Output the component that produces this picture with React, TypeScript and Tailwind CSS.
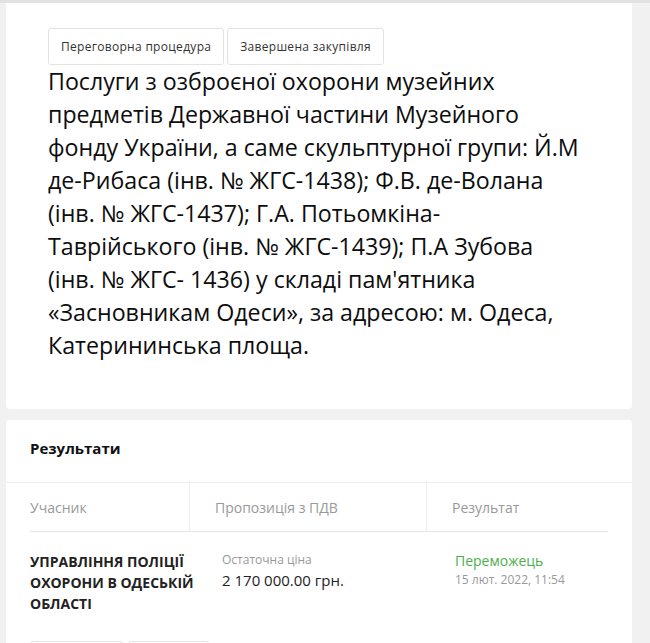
import React from "react";

const tags = ["Переговорна процедура", "Завершена закупівля"];

const titleLines = [
	"Послуги з озброєної охорони музейних",
	"предметів Державної частини Музейного",
	"фонду України, а саме скульптурної групи: Й.М",
	"де-Рибаса (інв. № ЖГС-1438); Ф.В. де-Волана",
	"(інв. № ЖГС-1437); Г.А. Потьомкіна-",
	"Таврійського (інв. № ЖГС-1439); П.А Зубова",
	"(інв. № ЖГС- 1436) у складі пам'ятника",
	"«Засновникам Одеси», за адресою: м. Одеса,",
	"Катерининська площа.",
];

const App: React.FC = () => {
	return (
		<div
			className="min-h-screen bg-[#f1f1f1] border-t-[3px] border-[#e2e2e2] pl-[6px] pr-[18px]"
			style={{ fontFamily: '"Open Sans", sans-serif' }}
		>
			<div className="bg-white rounded-b px-[42px] pt-[25px] pb-[47px]">
				<div className="flex gap-[3px]">
					{tags.map((tag) => (
						<span
							key={tag}
							className="h-[37px] px-3 flex items-center border border-[#e3e3e3] rounded-[3px] text-[12px] tracking-[0.3px] text-[#333]"
						>
							{tag}
						</span>
					))}
				</div>
				<h1 className="text-[23.2px] leading-[33px] text-[#0d0d0d] font-normal whitespace-nowrap">
					{titleLines.map((line, i) => (
						<React.Fragment key={i}>
							{line}
							{i < titleLines.length - 1 && <br />}
						</React.Fragment>
					))}
				</h1>
			</div>

			<div className="bg-white rounded-t mt-[11px]">
				<h2 className="px-6 pt-[17px] pb-[23px] text-[15px] leading-[22px] font-bold text-[#111]">
					Результати
				</h2>
				<div className="flex border-t border-[#eeeeee] h-[49px] text-[14px] text-[#999]">
					<div className="w-[184px] pl-6 flex items-center border-r border-[#eeeeee]">
						Учасник
					</div>
					<div className="w-[237px] pl-[25px] flex items-center border-r border-[#eeeeee]">
						Пропозиція з ПДВ
					</div>
					<div className="flex-1 pl-[25px] flex items-center">Результат</div>
				</div>
				<div className="mx-6 border-t border-[#e6e6e6]" />
				<div className="mx-6 flex pt-[19px]">
					<div className="w-[180px] mr-3 text-[14px] leading-[21px] font-bold text-[#222]">
						УПРАВЛІННЯ ПОЛІЦІЇ ОХОРОНИ В ОДЕСЬКІЙ ОБЛАСТІ
					</div>
					<div className="w-[233px]">
						<div className="text-[12px] leading-[18px] text-[#999]">
							Остаточна ціна
						</div>
						<div className="text-[15px] leading-[22px] text-[#222]">
							2 170 000.00 грн.
						</div>
					</div>
					<div>
						<div className="text-[14px] leading-[20px] text-[#4cae4c]">
							Переможець
						</div>
						<div className="text-[12px] leading-[18px] text-[#999]">
							15 лют. 2022, 11:54
						</div>
					</div>
				</div>
				<div className="mx-6 flex gap-[5px] mt-[27px]">
					<div className="w-[93px] h-[36px] border border-[#e3e3e3] rounded-[3px]" />
					<div className="w-[81px] h-[36px] border border-[#e3e3e3] rounded-[3px]" />
				</div>
			</div>
		</div>
	);
};

export default App;
